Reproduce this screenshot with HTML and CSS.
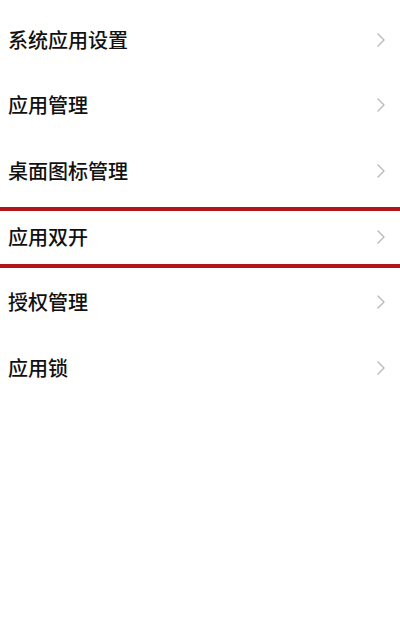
FILE: index.html
```html
<!DOCTYPE html>
<html lang="zh-CN">
<head>
<meta charset="utf-8">
<title>设置</title>
<link rel="stylesheet" href="styles.css">
</head>
<body>
<div class="page">
  <ul class="list">
    <li class="row"><span class="label">系统应用设置</span><svg class="chev" viewBox="0 0 8 14"><path d="M1 1 L7 7 L1 13"/></svg></li>
    <li class="row"><span class="label">应用管理</span><svg class="chev" viewBox="0 0 8 14"><path d="M1 1 L7 7 L1 13"/></svg></li>
    <li class="row"><span class="label">桌面图标管理</span><svg class="chev" viewBox="0 0 8 14"><path d="M1 1 L7 7 L1 13"/></svg></li>
    <li class="row"><span class="label">应用双开</span><svg class="chev" viewBox="0 0 8 14"><path d="M1 1 L7 7 L1 13"/></svg></li>
    <li class="row"><span class="label">授权管理</span><svg class="chev" viewBox="0 0 8 14"><path d="M1 1 L7 7 L1 13"/></svg></li>
    <li class="row"><span class="label">应用锁</span><svg class="chev" viewBox="0 0 8 14"><path d="M1 1 L7 7 L1 13"/></svg></li>
  </ul>
  <div class="highlight"></div>
</div>
</body>
</html>
```

FILE: styles.css
```css
html, body {
  margin: 0;
  padding: 0;
  background: #ffffff;
}
.page {
  position: relative;
  width: 400px;
  height: 623px;
  overflow: hidden;
  font-family: "Noto Sans CJK SC", "Noto Sans", sans-serif;
}
.list {
  list-style: none;
  margin: 0;
  padding: 7px 0 0 0;
}
.row {
  display: flex;
  align-items: center;
  justify-content: space-between;
  height: 65.6px;
  padding: 0 15px 0 8px;
}
.label {
  font-size: 20px;
  color: #111111;
  line-height: 1;
  font-weight: 500;
}
.chev {
  width: 8px;
  height: 14px;
  fill: none;
  stroke: #b9b9b9;
  stroke-width: 1.4;
  stroke-linecap: round;
  stroke-linejoin: round;
}
.highlight {
  position: absolute;
  left: 0;
  right: 0;
  top: 207px;
  height: 53px;
  border-top: 4px solid #b2161b;
  border-bottom: 4px solid #b2161b;
  pointer-events: none;
}
```
